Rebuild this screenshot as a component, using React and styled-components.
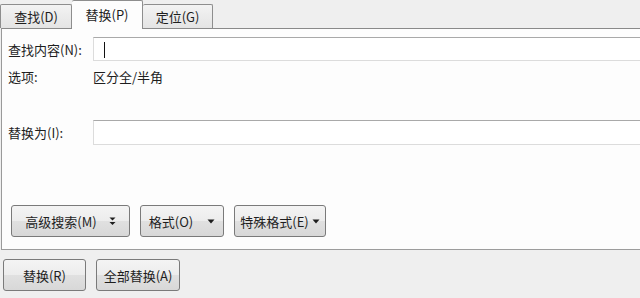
import React from "react";
import styled, { createGlobalStyle } from "styled-components";

const GlobalStyle = createGlobalStyle`
  html, body {
    margin: 0;
    padding: 0;
    background: #f0f0f0;
  }
  body {
    font-family: "Noto Sans CJK SC", "Noto Sans", sans-serif;
    color: #1e1e1e;
  }
`;

const Window = styled.div`
  width: 640px;
  height: 298px;
  overflow: hidden;
  background: #efefef;
  font-size: 13px;
`;

const TabBar = styled.div`
  display: flex;
  align-items: flex-end;
  height: 28px;
  position: relative;
  z-index: 1;
`;

const Tab = styled.div`
  box-sizing: border-box;
  width: ${(p) => p.width}px;
  height: ${(p) => (p.active ? 29 : 24)}px;
  margin-bottom: ${(p) => (p.active ? -1 : 0)}px;
  display: flex;
  align-items: center;
  justify-content: center;
  padding-bottom: ${(p) => (p.active ? 1 : 0)}px;
  border: 1px solid #8e8e8e;
  border-bottom: none;
  border-left: ${(p) => (p.noLeft ? "none" : "1px solid #8e8e8e")};
  border-radius: 2px 2px 0 0;
  background: ${(p) =>
    p.active ? "#fdfdfd" : "linear-gradient(#f3f3f3, #e4e4e4)"};
  color: #1e1e1e;
`;

const Panel = styled.div`
  box-sizing: border-box;
  height: 222px;
  margin-left: 1px;
  border-top: 1px solid #8a8a8a;
  border-left: 1px solid #9a9a9a;
  border-bottom: 1px solid #9c9c9c;
  background: #fdfdfd;
  padding: 8px 0 0 6px;
  display: flex;
  flex-direction: column;
`;

const Row = styled.div`
  display: grid;
  grid-template-columns: 85px 1fr;
  align-items: center;
  height: ${(p) => p.h}px;
  margin-top: ${(p) => p.mt || 0}px;
`;

const Label = styled.span`
  white-space: nowrap;
`;

const Field = styled.div`
  position: relative;
  box-sizing: border-box;
  height: 100%;
  margin-right: -10px;
  border: 1px solid #dcdcdc;
  border-top-color: #a9a9a9;
  background: #ffffff;
`;

const Caret = styled.span`
  position: absolute;
  left: 10px;
  top: 4px;
  width: 1px;
  height: 16px;
  background: #111;
`;

const ButtonRow = styled.div`
  display: flex;
  gap: 10px;
  margin-top: ${(p) => p.mt || 0}px;
  padding-left: ${(p) => p.pl || 0}px;
`;

const Button = styled.div`
  box-sizing: border-box;
  width: ${(p) => p.width}px;
  height: 32px;
  display: flex;
  align-items: center;
  justify-content: center;
  gap: ${(p) => p.gap || 0}px;
  border: 1px solid #7a7a7a;
  border-radius: 3px;
  background: linear-gradient(#f4f4f4 0%, #ececec 50%, #e0e0e0 51%, #d8d8d8 100%);
  color: #1e1e1e;
  white-space: nowrap;
`;

const Arrow = () => (
  <svg width="8" height="5" viewBox="0 0 8 5">
    <path d="M0.5 0.5 H7.5 L4 4.5 Z" fill="#1e1e1e" />
  </svg>
);

const DoubleArrow = () => (
  <svg width="7" height="9" viewBox="0 0 7 9">
    <path d="M0.5 0.5 H6.5 L3.5 3.5 Z" fill="#1e1e1e" />
    <path d="M0.5 5 H6.5 L3.5 8 Z" fill="#1e1e1e" />
  </svg>
);

export default function App() {
  return (
    <>
      <GlobalStyle />
      <Window>
        <TabBar>
          <Tab width={72}>查找(D)</Tab>
          <Tab width={71} active noLeft>
            替换(P)
          </Tab>
          <Tab width={70} noLeft>
            定位(G)
          </Tab>
        </TabBar>
        <Panel>
          <Row h={24}>
            <Label>查找内容(N):</Label>
            <Field>
              <Caret />
            </Field>
          </Row>
          <Row h={18} mt={6}>
            <Label>选项:</Label>
            <Label>区分全/半角</Label>
          </Row>
          <Row h={25} mt={35}>
            <Label>替换为(I):</Label>
            <Field />
          </Row>
          <ButtonRow mt={60} pl={3}>
            <Button width={119} gap={12}>
              高级搜索(M)
              <DoubleArrow />
            </Button>
            <Button width={84} gap={14}>
              格式(O)
              <Arrow />
            </Button>
            <Button width={92} gap={3}>
              特殊格式(E)
              <Arrow />
            </Button>
          </ButtonRow>
        </Panel>
        <ButtonRow mt={9} pl={3}>
          <Button width={83}>替换(R)</Button>
          <Button width={84}>全部替换(A)</Button>
        </ButtonRow>
      </Window>
    </>
  );
}
